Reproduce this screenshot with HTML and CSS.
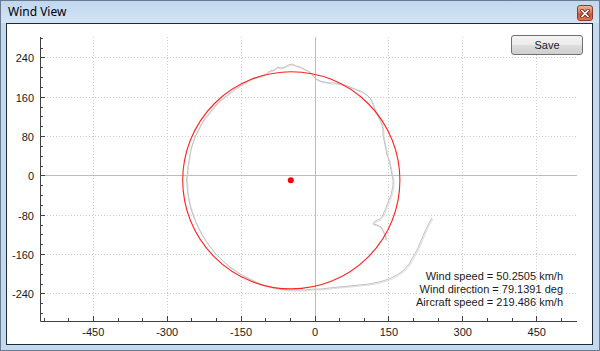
FILE: index.html
```html
<!DOCTYPE html>
<html>
<head>
<meta charset="utf-8">
<title>Wind View</title>
<link rel="stylesheet" href="styles.css">
</head>
<body>
<div class="window">
  <div class="titlebar">
    <span class="title">Wind View</span>
    <div class="close">
      <svg width="10" height="9" viewBox="0 0 10 9"><path class="x-outline" d="M2 1.5L8 7.5M8 1.5L2 7.5"/><path class="x-glyph" d="M2 1.5L8 7.5M8 1.5L2 7.5"/></svg>
    </div>
  </div>
  <div class="client">
    <svg class="plot" width="585" height="320" viewBox="7 24 585 320">
      <path class="grid" d="M41 57.5H577M41 97.5H577M41 136.5H577M41 215.5H577M41 254.5H577M41 293.5H577M93.5 37V321M167.5 37V321M241.5 37V321M388.5 37V321M462.5 37V321M536.5 37V321"/>
      <path class="zero" d="M41 175.5H577M315.5 37V321"/>
      <polyline class="trace2" points="293,65 289,66 285,68 281,69 278,68 274,71 270,72 266,75 262,77 258,78 254,79 250,81 245,84 240,87 235,90 230,94 225,98 220,102 216,106 212,111 208,116 204,121 201,126 198,132 195,138 193,144 191,150 190,156 189,162 188,168 188,174 187,180 188,186 188,192 189,198 190,204 192,210 194,216 196,222 199,228 202,234 205,239 208,244 212,249 216,254 221,259 226,264 231,268 237,272 243,276 249,279 255,282 261,285 268,287 275,289 282,290 290,291 298,291 306,291 314,290 322,290 330,289 340,288 350,287 360,286 370,285 380,283 390,280 398,276 405,271 410,265 414,258 418,251 421,244 424,237 427,230 430,224 433,219"/>
      <polyline class="trace" points="292,64 288,65 285,67 281,68 278,67 274,70 270,71 266,74 262,76 258,77 254,78 250,80 245,83 240,86 235,89 230,93 225,97 220,101 216,105 212,110 208,115 204,120 201,125 198,131 195,137 193,143 191,149 190,155 189,161 188,167 187.5,173 186.5,179 187,185 187.5,191 188.5,197 189.5,203 191,209 193,215 195.5,221 198,227 201,233 204,238 207.5,243 211,248 215,253 220,258 225,263 230,267 236,271 242,275 248,278 254,281 260,284 267,286 274,288 281,289 289,290 297,290 305,290 313,289 321,289 329,288 339,287 349,286 359,285 369,284 379,282 389,279 397,275 404,270 409,264 413,257 417,250 420,243 423,236 426,229 429,223 432,218"/>
      <polyline class="trace2" points="293,65 297,67 301,68 305,70 309,72 312,74 314,77 317,80 321,82 326,83 331,84 336,84 341,85 346,86 351,88 356,90 361,92 365,94 368,96 371,99 373,103 375,108 377,113 379,117 381,121 383,126 384,131 384,136 385,141 386,146 387,151 388,156 390,161 391,166 392,171 393,176 394,181 394,186 393,191 392,196 390,201 388,206 386,211 384,216 381,220 376,222 374,225 378,226 382,228 384,232 386,236 387,241"/>
      <polyline class="trace" points="292,64 296,66 300,67 304,69 308,71 311,73 313,76 316,79 320,81 325,82 330,83 335,83 340,84 345,85 350,87 355,89 360,91 364,93 367,95 370,98 372,102 374,107 376,112 378,116 380,120 382,125 383,130 383,135 384,140 385,145 386,150 387,155 389,160 390,165 391,170 392,175 393,180 393,185 392,190 391,195 389,200 387,205 385,210 383,215 380,219 375,221 373,224 377,225 381,227 383,231 385,235 386,240"/>
      <circle class="ring" cx="291.3" cy="180.3" r="108.6"/>
      <circle class="dot" cx="290.8" cy="180.3" r="3"/>
      <path class="axis" d="M40.5 37V321.5H577"/>
      <path class="axis" d="M41 57.5h4M41 97.5h4M41 136.5h4M41 175.5h4M41 215.5h4M41 254.5h4M41 293.5h4M41 38.5h2M41 48.5h2M41 67.5h2M41 77.5h2M41 87.5h2M41 107.5h2M41 116.5h2M41 126.5h2M41 146.5h2M41 156.5h2M41 166.5h2M41 185.5h2M41 195.5h2M41 205.5h2M41 225.5h2M41 234.5h2M41 244.5h2M41 264.5h2M41 274.5h2M41 284.5h2M41 303.5h2M41 313.5h2"/>
      <path class="axis" d="M93.5 321v-5M167.5 321v-5M241.5 321v-5M315.5 321v-5M388.5 321v-5M462.5 321v-5M536.5 321v-5M44.5 321v-3M68.5 321v-3M118.5 321v-3M142.5 321v-3M191.5 321v-3M216.5 321v-3M265.5 321v-3M290.5 321v-3M339.5 321v-3M364.5 321v-3M413.5 321v-3M438.5 321v-3M487.5 321v-3M512.5 321v-3M561.5 321v-3"/>
      <g class="ylab">
        <text x="34" y="61.5">240</text>
        <text x="34" y="101.5">160</text>
        <text x="34" y="140.5">80</text>
        <text x="34" y="179.5">0</text>
        <text x="34" y="219.5">-80</text>
        <text x="34" y="258.5">-160</text>
        <text x="34" y="297.5">-240</text>
      </g>
      <g class="xlab">
        <text x="93.3" y="336">-450</text>
        <text x="167.2" y="336">-300</text>
        <text x="241.1" y="336">-150</text>
        <text x="315" y="336">0</text>
        <text x="388.9" y="336">150</text>
        <text x="462.8" y="336">300</text>
        <text x="536.7" y="336">450</text>
      </g>
      <g class="info">
        <text x="563" y="280">Wind speed = 50.2505 km/h</text>
        <text x="563" y="293">Wind direction = 79.1391 deg</text>
        <text x="563" y="306">Aircraft speed = 219.486 km/h</text>
      </g>
    </svg>
    <button class="save">Save</button>
  </div>
</div>
</body>
</html>
```
FILE: styles.css
```css
html, body {
  margin: 0;
  padding: 0;
  width: 600px;
  height: 351px;
  overflow: hidden;
  background: #c4daf1;
}
.window {
  width: 600px;
  height: 351px;
  box-sizing: border-box;
  border: 1px solid #6a7b8f;
  background: #c3d9f0;
  padding: 0 6px 5px 5px;
  display: flex;
  flex-direction: column;
}
.titlebar {
  height: 22px;
  flex: none;
  display: flex;
  align-items: flex-start;
  justify-content: space-between;
  background: linear-gradient(#c0d7ef, #d3e4f6);
  margin: 0 -6px 0 -5px;
  padding: 0 6px 0 7px;
}
.title {
  font-family: "Noto Sans", "Open Sans", sans-serif;
  font-size: 12px;
  line-height: 16px;
  margin-top: 3px;
  color: #000;
}
.close {
  width: 16px;
  height: 16px;
  margin-top: 4px;
  box-sizing: border-box;
  border: 1px solid #8c3b2d;
  border-radius: 3px;
  background: linear-gradient(#eeae9a 0%, #de7e62 45%, #cf5436 55%, #e0784f 100%);
  display: flex;
  align-items: center;
  justify-content: center;
}
.close svg {
  display: block;
}
.x-outline {
  stroke: #5a2418;
  stroke-width: 3.2;
  stroke-linecap: square;
  fill: none;
}
.x-glyph {
  stroke: #ffffff;
  stroke-width: 1.6;
  stroke-linecap: square;
  fill: none;
}
.client {
  flex: 1;
  position: relative;
  border: 1px solid #222a33;
  background: #ffffff;
}
.plot {
  display: block;
}
.grid {
  fill: none;
  stroke: #cccccc;
  stroke-width: 1;
  stroke-dasharray: 1 2;
}
.zero {
  fill: none;
  stroke: #bdbdbd;
  stroke-width: 1;
}
.axis {
  fill: none;
  stroke: #404040;
  stroke-width: 1;
}
.trace {
  fill: none;
  stroke: #c2c2c2;
  stroke-width: 1;
  stroke-linejoin: round;
}
.trace2 {
  fill: none;
  stroke: #dddddd;
  stroke-width: 1;
  stroke-linejoin: round;
}
.ring {
  fill: none;
  stroke: #ff2222;
  stroke-width: 1.1;
}
.dot {
  fill: #ff0000;
}
.ylab text, .xlab text, .info text {
  font-family: "Liberation Sans", Arial, sans-serif;
  font-size: 11px;
  fill: #1a1a1a;
}
.ylab text {
  text-anchor: end;
}
.xlab text {
  text-anchor: middle;
}
.info text {
  text-anchor: end;
}
.save {
  position: absolute;
  top: 11px;
  right: 9px;
  width: 72px;
  height: 20px;
  box-sizing: border-box;
  border: 1px solid #707070;
  border-radius: 3px;
  background: linear-gradient(#f3f3f3 0%, #ebebeb 48%, #dddddd 52%, #cfcfcf 100%);
  font-family: "Liberation Sans", Arial, sans-serif;
  font-size: 11px;
  color: #1b1b2e;
  padding: 0;
  margin: 0;
}
```
